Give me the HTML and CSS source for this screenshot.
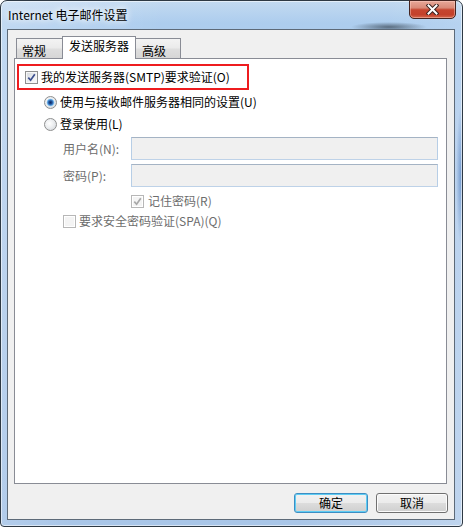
FILE: index.html
```html
<!DOCTYPE html>
<html>
<head>
<meta charset="utf-8">
<title>Internet 电子邮件设置</title>
<link rel="stylesheet" href="styles.css">
</head>
<body>

<div class="window">

  <div class="titlebar">
    <span class="title">Internet 电子邮件设置</span>
    <button class="close-btn" aria-label="关闭">
      <svg width="13" height="11" viewBox="0 0 13 11">
        <path d="M2.5 1.5 L10.5 9.5 M10.5 1.5 L2.5 9.5" stroke="#3b2320" stroke-width="4" stroke-linecap="square"/>
        <path d="M2.5 1.5 L10.5 9.5 M10.5 1.5 L2.5 9.5" stroke="#fff" stroke-width="2" stroke-linecap="square"/>
      </svg>
    </button>
  </div>

  <div class="client">

    <div class="tabs">
      <div class="tab tab-general">常规</div>
      <div class="tab tab-active">发送服务器</div>
      <div class="tab tab-advanced">高级</div>
    </div>

    <div class="panel">

      <div class="highlight">
        <span class="checkbox">
          <svg width="9" height="9" viewBox="0 0 9 9"><path d="M1.3 4.6 L3.6 7.2 L7.8 1.2" fill="none" stroke="#3c4f8e" stroke-width="1.7"/></svg>
        </span>
        <span>我的发送服务器(SMTP)要求验证(O)</span>
      </div>

      <div class="row radio-row radio-first">
        <span class="radio radio-on"></span>
        <span>使用与接收邮件服务器相同的设置(U)</span>
      </div>
      <div class="row radio-row">
        <span class="radio"></span>
        <span>登录使用(L)</span>
      </div>

      <div class="row field-row">
        <span class="field-label">用户名(N):</span>
        <span class="textbox"></span>
      </div>
      <div class="row field-row field-second">
        <span class="field-label">密码(P):</span>
        <span class="textbox"></span>
      </div>

      <div class="row remember-row">
        <span class="checkbox checkbox-off">
          <svg width="9" height="9" viewBox="0 0 9 9"><path d="M1.3 4.6 L3.6 7.2 L7.8 1.2" fill="none" stroke="#a8a8a8" stroke-width="1.7"/></svg>
        </span>
        <span class="dim">记住密码(R)</span>
      </div>

      <div class="row spa-row">
        <span class="checkbox checkbox-off"></span>
        <span class="dim">要求安全密码验证(SPA)(Q)</span>
      </div>

    </div>

    <div class="buttons">
      <button class="btn btn-ok">确定</button>
      <button class="btn btn-cancel">取消</button>
    </div>

  </div>

</div>

</body>
</html>
```

FILE: styles.css
```css
* {
  box-sizing: border-box;
}

body {
  margin: 0;
  overflow: hidden;
  background: #fff;
  font: 12px/16px "Noto Sans CJK SC", "Noto Sans", sans-serif;
  color: #000;
}

/* window frame */
.window {
  width: 463px;
  height: 527px;
  display: flex;
  flex-direction: column;
  padding: 0 7px 6px 6px;
  border: 1px solid #2e3944;
  border-radius: 7px 7px 4px 4px;
  background:
    radial-gradient(ellipse 38px 5px at 388px 26px, rgba(35,45,55,.6), rgba(35,45,55,0)),
    radial-gradient(ellipse 5px 70px at 460px 175px, rgba(60,110,180,.55), rgba(60,110,180,0)),
    linear-gradient(100deg, rgba(255,255,255,.25), rgba(255,255,255,0) 30%, rgba(255,255,255,0) 70%, rgba(255,255,255,.25)),
    linear-gradient(180deg, #c3daf1 0, #adcdee 22px, #b0ccec 120px, #a9c6e8 100%);
  box-shadow: inset 0 0 0 1px rgba(255,255,255,.55);
}

.titlebar {
  height: 28px;
  display: flex;
  align-items: center;
  justify-content: space-between;
}

.title {
  margin-left: 1px;
  text-shadow: 0 0 6px #fff, 0 0 10px #fff;
}

.close-btn {
  align-self: flex-start;
  width: 47px;
  height: 19px;
  margin: -1px -1px 0 0;
  padding: 0;
  display: flex;
  align-items: center;
  justify-content: center;
  border: 1px solid #452420;
  border-radius: 0 0 5px 5px;
  background: linear-gradient(180deg, #e8a899 0, #d98a78 40%, #c6452f 52%, #c3412b 80%, #d4684d 100%);
  box-shadow: inset 0 0 0 1px rgba(255,210,200,.45);
}

/* client area */
.client {
  flex: 1;
  display: flex;
  flex-direction: column;
  border: 1px solid #5d6a78;
  background: #f0f0f0;
}

.tabs {
  height: 22px;
  margin: 6px 0 0 8px;
  display: flex;
  align-items: flex-end;
}

.tab {
  height: 20px;
  padding: 4px 0 0 6px;
  border: 1px solid #898c95;
  border-bottom: none;
  background: linear-gradient(180deg, #f3f3f3 0, #ebebeb 45%, #dedede 55%, #d6d6d6 100%);
  white-space: nowrap;
}

.tab-general {
  width: 48px;
  padding-left: 5px;
}

.tab-active {
  width: 74px;
  height: 23px;
  margin: 0 -2px -1px -2px;
  padding-top: 1px;
  background: #fff;
  position: relative;
  z-index: 1;
}

.tab-advanced {
  width: 47px;
  padding-left: 7px;
}

.panel {
  width: 433px;
  height: 426px;
  margin-left: 6px;
  display: flex;
  flex-direction: column;
  align-items: flex-start;
  border: 1px solid #898c95;
  background: #fff;
}

.highlight {
  width: 232px;
  height: 26px;
  margin: 5px 0 0 2px;
  padding-left: 6px;
  display: flex;
  align-items: center;
  border: 2px solid #ee1c1f;
}

.row {
  display: flex;
  align-items: center;
}

.radio-row {
  height: 22px;
  margin-left: 29px;
}

.radio-first {
  margin-top: 1px;
}

.field-row {
  height: 23px;
  margin: 2px 0 0 48px;
}

.field-second {
  margin-top: 4px;
}

.field-label {
  width: 68px;
  color: #6d6d6d;
}

.textbox {
  width: 307px;
  height: 23px;
  border: 1px solid;
  border-color: #a4b3c4 #b7cee6 #bed2e8 #b7cee6;
  background: #f0f0f0;
}

.remember-row {
  height: 22px;
  margin: 3px 0 0 116px;
}

.remember-row .checkbox {
  margin-right: 4px;
}

.spa-row {
  height: 18px;
  margin-left: 48px;
}

.dim {
  color: #6d6d6d;
}

/* controls */
.checkbox {
  flex: none;
  width: 13px;
  height: 13px;
  margin-right: 3px;
  display: flex;
  align-items: center;
  justify-content: center;
  border: 1px solid #8e8f8f;
  background: linear-gradient(135deg, #d3d7dc 0, #eef0f2 60%, #fbfbfb 100%);
  box-shadow: inset 0 0 0 1px #f6f6f6;
}

.checkbox-off {
  border-color: #b7b7b7;
  background: #f4f4f4;
  box-shadow: inset 0 0 0 1px #fff;
}

.radio {
  flex: none;
  width: 13px;
  height: 13px;
  margin-right: 3px;
  border: 1px solid #8e8f8f;
  border-radius: 50%;
  background: radial-gradient(circle at 40% 40%, #ffffff 0, #eceef0 45%, #cfd3d8 100%);
}

.radio-on {
  background:
    radial-gradient(circle at 50% 50%, #0f2b63 0, #1f4f96 1.6px, #4d93d6 2.8px, #9fd0f3 3.6px, rgba(159,208,243,0) 4.2px),
    radial-gradient(circle at 40% 40%, #ffffff 0, #eceef0 45%, #cfd3d8 100%);
}

.buttons {
  margin: 9px 6px 0 0;
  display: flex;
  justify-content: flex-end;
  gap: 8px;
}

.btn {
  height: 20px;
  padding: 0;
  font: inherit;
  color: #000;
  border: 1px solid #707070;
  border-radius: 3px;
  background: linear-gradient(180deg, #f2f2f2 0, #ebebeb 50%, #dddddd 50%, #cfcfcf 100%);
  box-shadow: inset 0 0 0 1px #fbfbfb;
}

.btn-ok {
  width: 74px;
  border-color: #3d8ec3;
  box-shadow: inset 0 0 0 1px #5fcdf4;
}

.btn-cancel {
  width: 72px;
}
```
